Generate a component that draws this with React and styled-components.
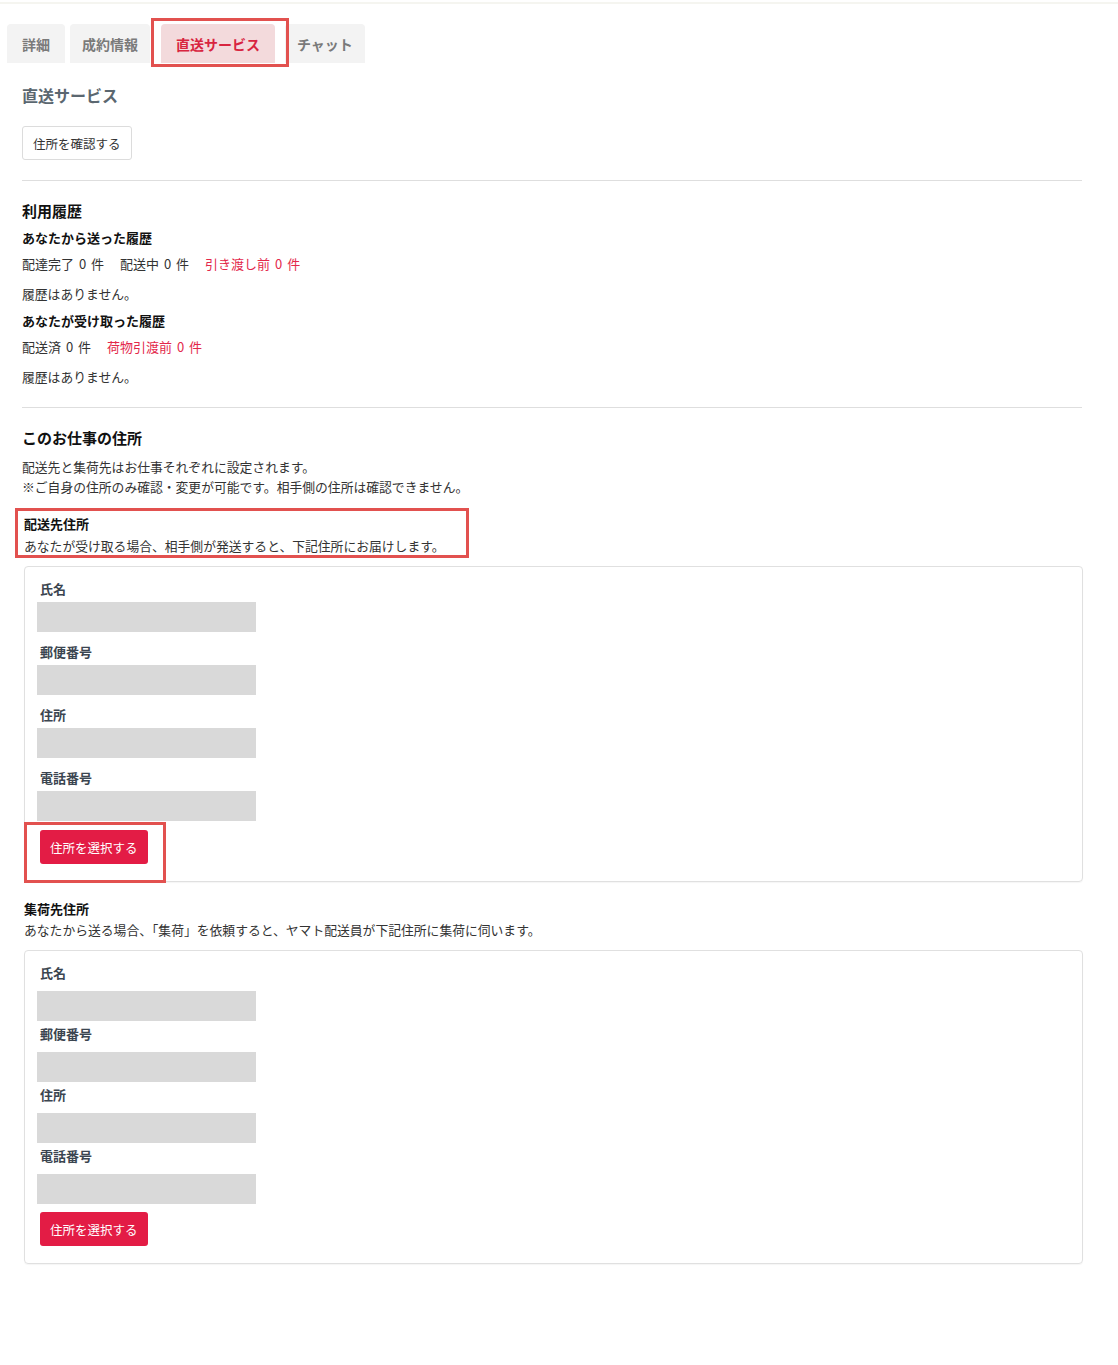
import React from 'react';
import styled, { createGlobalStyle, css } from 'styled-components';

const GlobalStyle = createGlobalStyle`
  body {
    margin: 0;
    background: #fff;
    font-family: "Noto Sans CJK JP", "Noto Sans", sans-serif;
    color: #333;
  }
`;

const TopRule = styled.div`
  height: 2px;
  border-bottom: 2px solid #f5f5f0;
`;

const Tabs = styled.div`
  display: flex;
  gap: 5px;
  padding-left: 7px;
  margin-top: 20px;
`;

const Tab = styled.div`
  position: relative;
  height: 39px;
  min-width: 58px;
  box-sizing: border-box;
  padding: 0 12px;
  display: flex;
  align-items: center;
  justify-content: center;
  font-size: 14px;
  font-weight: 700;
  color: #7a7a7a;
  background: #f3f3f3;
  border-radius: 4px 4px 0 0;
  ${p => p.$active && css`
    margin: 0 5px 0 6px;
    padding: 0 15px;
    color: #d8243f;
    background: #f3dadc;
  `}
`;

const Marker = styled.div`
  position: absolute;
  z-index: 2;
  border: 3px solid #e2514f;
  pointer-events: none;
`;

const Content = styled.div`
  padding: 0 36px 80px 22px;
`;

const PageTitle = styled.h2`
  margin: 20px 0 0;
  font-size: 16px;
  line-height: 24px;
  font-weight: 700;
  color: #5b6770;
`;

const GhostButton = styled.button`
  margin-top: 19px;
  height: 34px;
  padding: 0 10px;
  font-family: inherit;
  font-size: 12.5px;
  color: #333;
  background: #fff;
  border: 1px solid #dcdcdc;
  border-radius: 3px;
`;

const Divider = styled.hr`
  margin: ${p => p.$top}px 0 0;
  border: 0;
  border-top: 1px solid #dedede;
`;

const SectionTitle = styled.h3`
  margin: 19px 0 0;
  font-size: 15px;
  line-height: 22px;
  font-weight: 700;
  color: #111;
`;

const SubTitle = styled.h4`
  margin: ${p => p.$top}px 0 0;
  font-size: 13px;
  line-height: 20px;
  font-weight: 700;
  color: #111;
`;

const Counts = styled.div`
  display: flex;
  gap: 16px;
  margin-top: 6px;
  font-size: 13px;
  line-height: 20px;
  word-spacing: 2px;
`;

const Count = styled.span`
  color: ${p => (p.$alert ? '#e3284b' : '#333')};
`;

const Text = styled.p`
  margin: ${p => p.$top || 0}px 0 0;
  font-size: 12.8px;
  line-height: 20px;
`;

const AddressBlock = styled.div`
  margin: 0 -1px 0 2px;
`;

const Intro = styled.div`
  position: relative;
  margin-top: ${p => p.$top}px;
`;

const Card = styled.div`
  margin-top: 10px;
  padding: 12px 12px 17px;
  border: 1px solid #e0e0e0;
  border-radius: 4px;
  box-shadow: 0 1px 1px rgba(0, 0, 0, 0.04);
`;

const Field = styled.div`
  margin-bottom: ${p => (p.$loose ? 3 : 10)}px;
`;

const Label = styled.div`
  padding-left: 3px;
  font-size: 13px;
  line-height: 20px;
  font-weight: 700;
  color: #3b4550;
  margin-bottom: ${p => (p.$loose ? 8 : 3)}px;
`;

const Placeholder = styled.div`
  width: 219px;
  height: 30px;
  background: #d9d9d9;
`;

const ButtonWrap = styled.div`
  position: relative;
  display: inline-block;
  margin: ${p => (p.$loose ? 5 : -1)}px 0 0 3px;
`;

const PrimaryButton = styled.button`
  display: block;
  height: 34px;
  padding: 0 10px;
  font-family: inherit;
  font-size: 12.5px;
  color: #fff;
  background: #e31c45;
  border: 0;
  border-radius: 3px;
`;

const fields = ['氏名', '郵便番号', '住所', '電話番号'];

function AddressCard({ loose, marked }) {
  return (
    <Card>
      {fields.map(f => (
        <Field key={f} $loose={loose}>
          <Label $loose={loose}>{f}</Label>
          <Placeholder />
        </Field>
      ))}
      <ButtonWrap $loose={loose}>
        <PrimaryButton>住所を選択する</PrimaryButton>
        {marked && <Marker style={{ left: -16, right: -18, top: -8, bottom: -19 }} />}
      </ButtonWrap>
    </Card>
  );
}

export default function App() {
  return (
    <>
      <GlobalStyle />
      <TopRule />
      <Tabs>
        <Tab>詳細</Tab>
        <Tab>成約情報</Tab>
        <Tab $active>
          直送サービス
          <Marker style={{ left: -10, right: -14, top: -6, bottom: -4 }} />
        </Tab>
        <Tab>チャット</Tab>
      </Tabs>
      <Content>
        <PageTitle>直送サービス</PageTitle>
        <GhostButton>住所を確認する</GhostButton>
        <Divider $top={20} />

        <SectionTitle>利用履歴</SectionTitle>
        <SubTitle $top={6}>あなたから送った履歴</SubTitle>
        <Counts>
          <Count>配達完了 0 件</Count>
          <Count>配送中 0 件</Count>
          <Count $alert>引き渡し前 0 件</Count>
        </Counts>
        <Text $top={10}>履歴はありません。</Text>
        <SubTitle $top={7}>あなたが受け取った履歴</SubTitle>
        <Counts>
          <Count>配送済 0 件</Count>
          <Count $alert>荷物引渡前 0 件</Count>
        </Counts>
        <Text $top={10}>履歴はありません。</Text>
        <Divider $top={20} />

        <SectionTitle>このお仕事の住所</SectionTitle>
        <Text $top={8}>配送先と集荷先はお仕事それぞれに設定されます。</Text>
        <Text>※ご自身の住所のみ確認・変更が可能です。相手側の住所は確認できません。</Text>

        <AddressBlock>
          <Intro $top={17}>
            <SubTitle $top={0}>配送先住所</SubTitle>
            <Text $top={2}>あなたが受け取る場合、相手側が発送すると、下記住所にお届けします。</Text>
            <Marker style={{ left: -9, top: -6, width: 448, bottom: -2 }} />
          </Intro>
          <AddressCard marked />

          <Intro $top={17}>
            <SubTitle $top={0}>集荷先住所</SubTitle>
            <Text $top={1}>あなたから送る場合、「集荷」を依頼すると、ヤマト配送員が下記住所に集荷に伺います。</Text>
          </Intro>
          <AddressCard loose />
        </AddressBlock>
      </Content>
    </>
  );
}
